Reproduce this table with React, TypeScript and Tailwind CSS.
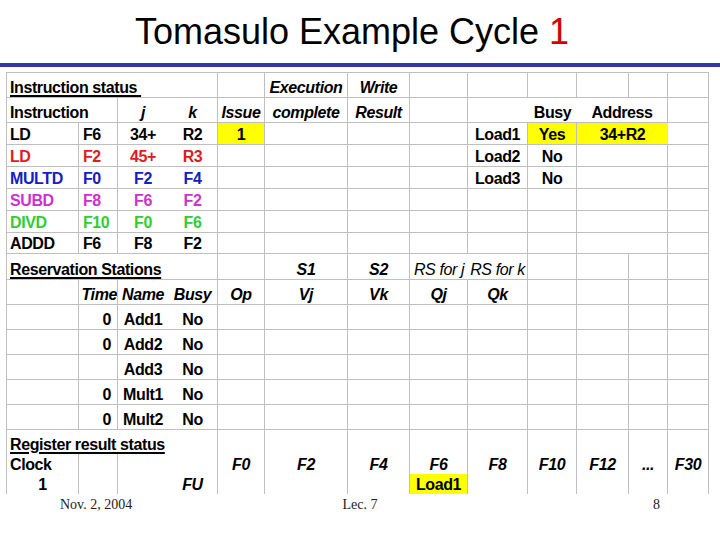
import clsx from "clsx";

type Cell = {
  t: string;
  span?: 2 | 4;
  a?: "l" | "l4" | "c" | "r" | "r0";
  i?: boolean; // bold italic
  it?: boolean; // plain italic
  u?: boolean;
  y?: boolean;
  nr?: boolean;
  nb?: boolean;
  col?: string;
};

const c = (t = "", o: Partial<Cell> = {}): Cell => ({ t, ...o });

const GRID =
  "grid grid-cols-[72px_39px_50px_50px_47px_83px_62px_58px_60px_49px_52px_39px_41px]";

const RED = "text-[#e01b1b]";
const BLUE = "text-[#1420c4]";
const PINK = "text-[#cc33cc]";
const GREEN = "text-[#33cc33]";

function ins(
  op: string,
  d: string,
  j: string,
  k: string,
  col: string,
  extra: { issue?: string; load?: string; busy?: string; addr?: string; yl?: boolean } = {}
): Cell[] {
  return [
    c(op, { a: "l", col }),
    c(d, { a: "l4", col }),
    c(j, { nr: true, col }),
    c(k, { col }),
    c(extra.issue ?? "", { y: !!extra.issue }),
    c(),
    c(),
    c(),
    c(extra.load ?? ""),
    c(extra.busy ?? "", { y: extra.yl }),
    c(extra.addr ?? "", { span: 2, y: extra.yl, nr: extra.yl }),
    c(),
  ];
}

function rs(time: string, name: string): Cell[] {
  return [
    c(),
    c(time, { a: "r" }),
    c(name, { nr: true }),
    c("No"),
    c(), c(), c(), c(), c(), c(), c(), c(), c(),
  ];
}

const rows: { h: string; cells: Cell[] }[] = [
  {
    h: "h-[25px]",
    cells: [
      c("Instruction status\u00a0", { span: 4, a: "l", u: true }),
      c(),
      c("Execution", { i: true }),
      c("Write", { i: true }),
      c(), c(), c(), c(), c(), c(),
    ],
  },
  {
    h: "h-[25px]",
    cells: [
      c("Instruction", { span: 2, a: "l" }),
      c("j", { i: true, nr: true }),
      c("k", { i: true }),
      c("Issue", { i: true }),
      c("complete", { i: true }),
      c("Result", { i: true }),
      c(),
      c("", { nr: true }),
      c("Busy", { nr: true }),
      c("Address", { span: 2 }),
      c(),
    ],
  },
  { h: "h-[22px]", cells: ins("LD", "F6", "34+", "R2", "text-black", { issue: "1", load: "Load1", busy: "Yes", addr: "34+R2", yl: true }) },
  { h: "h-[22px]", cells: ins("LD", "F2", "45+", "R3", RED, { load: "Load2", busy: "No" }) },
  { h: "h-[22px]", cells: ins("MULTD", "F0", "F2", "F4", BLUE, { load: "Load3", busy: "No" }) },
  { h: "h-[22px]", cells: ins("SUBD", "F8", "F6", "F2", PINK) },
  { h: "h-[22px]", cells: ins("DIVD", "F10", "F0", "F6", GREEN) },
  { h: "h-[21px]", cells: ins("ADDD", "F6", "F8", "F2", "text-black") },
  {
    h: "h-[26px]",
    cells: [
      c("Reservation Stations", { span: 4, a: "l", u: true }),
      c(),
      c("S1", { i: true }),
      c("S2", { i: true }),
      c("RS for j", { it: true, nr: true }),
      c("RS for k", { it: true }),
      c(), c(), c(), c(),
    ],
  },
  {
    h: "h-[25px]",
    cells: [
      c(),
      c("Time", { i: true, a: "r0" }),
      c("Name", { i: true, nr: true }),
      c("Busy", { i: true }),
      c("Op", { i: true }),
      c("Vj", { i: true }),
      c("Vk", { i: true }),
      c("Qj", { i: true }),
      c("Qk", { i: true }),
      c(), c(), c(), c(),
    ],
  },
  { h: "h-[25px]", cells: rs("0", "Add1") },
  { h: "h-[25px]", cells: rs("0", "Add2") },
  { h: "h-[25px]", cells: rs("", "Add3") },
  { h: "h-[25px]", cells: rs("0", "Mult1") },
  { h: "h-[25px]", cells: rs("0", "Mult2") },
  {
    h: "h-[24px]",
    cells: [
      c("Register result status", { span: 4, a: "l", u: true, nb: true }),
      ...Array.from({ length: 9 }, () => c("", { nb: true })),
    ],
  },
  {
    h: "h-[20px]",
    cells: [
      c("Clock", { a: "l", nb: true }),
      c("", { nb: true }),
      c("", { nb: true, nr: true }),
      c("", { nb: true }),
      ...["F0", "F2", "F4", "F6", "F8", "F10", "F12", "...", "F30"].map((t) =>
        c(t, { i: true, nb: true })
      ),
    ],
  },
  {
    h: "h-[20px]",
    cells: [
      c("1", { nb: true }),
      c("", { nb: true }),
      c("", { nb: true, nr: true }),
      c("FU", { i: true, nb: true }),
      c("", { nb: true }),
      c("", { nb: true }),
      c("", { nb: true }),
      c("Load1", { y: true, nb: true }),
      ...Array.from({ length: 5 }, () => c("", { nb: true })),
    ],
  },
];

function GridCell({ cell }: { cell: Cell }) {
  return (
    <div
      className={clsx(
        "flex items-end overflow-hidden whitespace-nowrap border-[#bfbfbf] leading-[18px]",
        !cell.nr && "border-r",
        !cell.nb && "border-b",
        cell.span === 2 && "col-span-2",
        cell.span === 4 && "col-span-4",
        cell.a === "l" && "justify-start pl-[3px]",
        cell.a === "l4" && "justify-start pl-[4px]",
        cell.a === "r" && "justify-end pr-[6px]",
        cell.a === "r0" && "justify-end",
        (!cell.a || cell.a === "c") && "justify-center",
        cell.it ? "font-normal italic" : "font-bold",
        cell.i && "italic",
        cell.y && "bg-[#ffff00]",
        cell.col ?? "text-black"
      )}
    >
      {cell.t && (
        <span className={clsx(cell.u && "underline decoration-2 underline-offset-[2px]")}>
          {cell.t}
        </span>
      )}
    </div>
  );
}

export default function App() {
  return (
    <div className="flex h-[540px] w-[720px] flex-col bg-white font-['Liberation_Sans',Arial,sans-serif]">
      {/* Title */}
      <div className="h-[63px] pr-[16px] pt-[12px] text-center text-[36px] leading-[40px] text-black">
        Tomasulo Example Cycle <span className="text-[#d40000]">1</span>
      </div>
      <div className="h-[4px] w-full bg-[#3535a8]" />

      {/* Spreadsheet */}
      <div className="ml-[6px] mt-[5px] w-[703px] border-l border-t border-[#bfbfbf] text-[16px] tracking-[-0.4px]">
        {rows.map((r, ri) => (
          <div key={ri} className={clsx(GRID, r.h)}>
            {r.cells.map((cell, ci) => (
              <GridCell key={ci} cell={cell} />
            ))}
          </div>
        ))}
      </div>

      {/* Footer */}
      <div className="grid grid-cols-3 pt-[3px] font-['Liberation_Serif','Times_New_Roman',serif] text-[14px] leading-[16px] text-[#222]">
        <div className="pl-[60px]">Nov. 2, 2004</div>
        <div className="text-center">Lec. 7</div>
        <div className="pr-[60px] text-right">8</div>
      </div>
    </div>
  );
}
